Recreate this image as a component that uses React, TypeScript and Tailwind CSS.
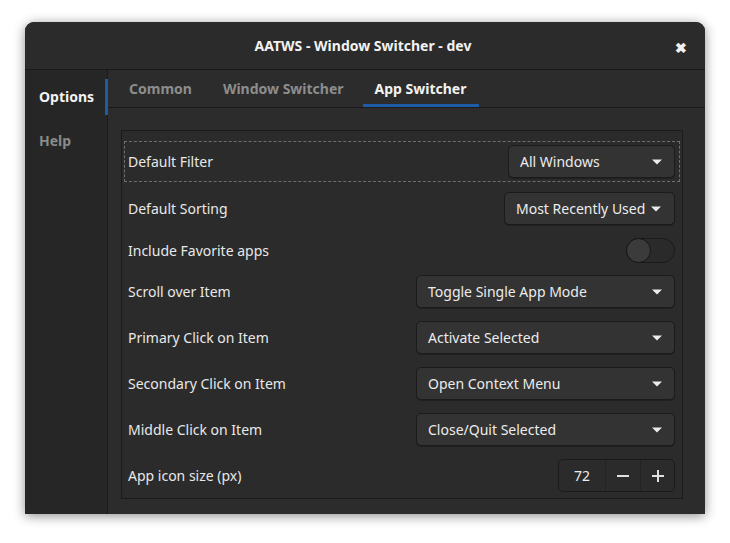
import { useState } from "react";

const font = { fontFamily: '"Noto Sans", "Open Sans", sans-serif' };

function Arrow() {
  return (
    <svg width="10" height="6" viewBox="0 0 10 6" className="shrink-0">
      <path d="M0 0.5 L10 0.5 L5 5.5 Z" fill="#ececec" />
    </svg>
  );
}

function Dropdown({ value, width, compact }: { value: string; width: string; compact?: boolean }) {
  return (
    <div
      className={`${width} h-[33px] flex items-center rounded-[5px] border border-[#1b1b1b] bg-[#333333] shadow-[0_1px_0_rgba(0,0,0,0.25)] pl-[11px] pr-[12px] text-[14px] text-[#ececec] ${
        compact ? "gap-[6px]" : "justify-between"
      }`}
    >
      <span className="whitespace-nowrap">{value}</span>
      <Arrow />
    </div>
  );
}

function Toggle() {
  return (
    <div className="w-[49px] h-[25px] rounded-full border border-[#1b1b1b] bg-[#2a2a2a] flex items-center">
      <div className="w-[25px] h-[25px] -ml-px rounded-full border border-[#161616] bg-[#3b3b3b]" />
    </div>
  );
}

function SpinButton() {
  return (
    <div className="w-[117px] h-[33px] flex rounded-[5px] border border-[#1b1b1b] bg-[#2b2b2b] text-[#ececec]">
      <div className="w-[47px] flex items-center justify-center text-[14px] border-r border-[#232323]">72</div>
      <div className="w-[35px] flex items-center justify-center border-r border-[#232323]">
        <svg width="12" height="2" viewBox="0 0 12 2">
          <rect width="12" height="2" fill="#e0e0e0" />
        </svg>
      </div>
      <div className="flex-1 flex items-center justify-center">
        <svg width="12" height="12" viewBox="0 0 12 12">
          <rect y="5" width="12" height="2" fill="#e0e0e0" />
          <rect x="5" width="2" height="12" fill="#e0e0e0" />
        </svg>
      </div>
    </div>
  );
}

const rows: { label: string; widget: React.ReactNode; pad: string; focus?: boolean }[] = [
  { label: "Default Filter", widget: <Dropdown value="All Windows" width="w-[167px]" />, pad: "pt-[4px] pb-[4px]", focus: true },
  { label: "Default Sorting", widget: <Dropdown value="Most Recently Used" width="w-[171px]" compact />, pad: "py-[3px]" },
  { label: "Include Favorite apps", widget: <Toggle />, pad: "pt-[3px] pb-[2px]" },
  { label: "Scroll over Item", widget: <Dropdown value="Toggle Single App Mode" width="w-[259px]" />, pad: "py-[3px]" },
  { label: "Primary Click on Item", widget: <Dropdown value="Activate Selected" width="w-[259px]" />, pad: "py-[3px]" },
  { label: "Secondary Click on Item", widget: <Dropdown value="Open Context Menu" width="w-[259px]" />, pad: "py-[3px]" },
  { label: "Middle Click on Item", widget: <Dropdown value="Close/Quit Selected" width="w-[259px]" />, pad: "py-[3px]" },
  { label: "App icon size (px)", widget: <SpinButton />, pad: "py-[3px]" },
];

export default function App() {
  const [tab] = useState("App Switcher");
  const tabs = ["Common", "Window Switcher", "App Switcher"];

  return (
    <div className="w-[730px] h-[543px] bg-white pt-[22px] pl-[25px]" style={font}>
      <div className="w-[680px] h-[492px] flex flex-col rounded-t-[9px] bg-[#2c2c2c] shadow-[0_2px_12px_rgba(0,0,0,0.45)] overflow-hidden">
        {/* header bar */}
        <div className="h-[48px] shrink-0 flex items-center justify-center relative bg-[#2b2b2b] border-b border-[#1a1a1a]">
          <span className="text-[14px] font-bold text-[#f2f2f2] -ml-[4px]">AATWS - Window Switcher - dev</span>
          <span className="absolute right-[18px] top-[15px] text-[14px] font-bold text-[#f2f2f2]">✖</span>
        </div>

        <div className="flex flex-1 min-h-0">
          {/* sidebar */}
          <div className="w-[83px] shrink-0 bg-[#262626] border-r border-[#1b1b1b] pt-[9px] flex flex-col">
            <div className="h-[36px] flex items-center pl-[14px] text-[14px] font-bold text-[#f2f2f2] border-r-[3px] border-[#1e5ba8] -mr-px">
              <span className="-mt-[1px]">Options</span>
            </div>
            <div className="h-[44px] flex items-center pl-[14px] pt-[6px] text-[14px] font-bold text-[#8a8a8a]">
              Help
            </div>
          </div>

          {/* main */}
          <div className="flex-1 flex flex-col">
            <div className="h-[38px] shrink-0 flex items-stretch gap-[7px] pl-[9px] border-b border-[#1b1b1b]">
              {tabs.map((t) => (
                <div
                  key={t}
                  className={`px-[12px] flex items-center text-[14px] font-bold border-b-[3px] ${
                    t === tab ? "text-[#f2f2f2] border-[#1e5ba8]" : "text-[#8d8d8d] border-transparent"
                  }`}
                >
                  <span className="mt-[3px]">{t}</span>
                </div>
              ))}
            </div>

            <div className="flex-1 pt-[22px] pl-[13px] pr-[22px] pb-[15px]">
              <div className="h-full border border-[#1b1b1b] bg-[#2b2b2b] px-[2px] pt-[10px] pb-[3px] flex flex-col gap-[7px]">
                {rows.map((r) => (
                  <div
                    key={r.label}
                    className={`flex items-center justify-between pl-[4px] pr-[5px] ${r.pad} ${
                      r.focus ? "outline outline-1 outline-dashed outline-[#6e6e6e] -outline-offset-1" : ""
                    }`}
                  >
                    <span className="text-[14px] text-[#e8e8e8]">{r.label}</span>
                    {r.widget}
                  </div>
                ))}
              </div>
            </div>
          </div>
        </div>
      </div>
    </div>
  );
}
